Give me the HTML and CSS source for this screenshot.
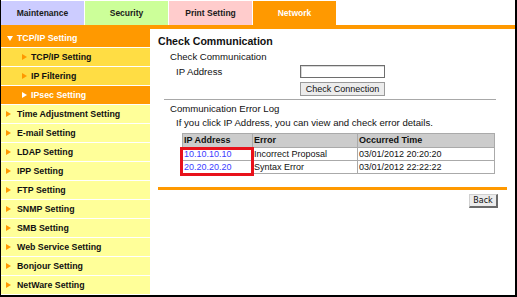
FILE: index.html
```html
<!DOCTYPE html>
<html lang="en">
<head>
    <meta charset="UTF-8">
    <title>Check Communication</title>
    <link rel="stylesheet" href="styles.css">
</head>
<body>
    <div class="frame">
        <div class="tabs">
            <div class="tab tab-maint">Maintenance</div>
            <div class="tab tab-security">Security</div>
            <div class="tab tab-print">Print Setting</div>
            <div class="tab tab-network">Network</div>
        </div>
        <div class="tab-line"></div>

        <div class="body">
            <ul class="menu">
                <li class="menu-head">TCP/IP Setting</li>
                <li class="menu-sub">TCP/IP Setting</li>
                <li class="menu-sub">IP Filtering</li>
                <li class="menu-sub active">IPsec Setting</li>
                <li class="menu-item">Time Adjustment Setting</li>
                <li class="menu-item">E-mail Setting</li>
                <li class="menu-item">LDAP Setting</li>
                <li class="menu-item">IPP Setting</li>
                <li class="menu-item">FTP Setting</li>
                <li class="menu-item">SNMP Setting</li>
                <li class="menu-item">SMB Setting</li>
                <li class="menu-item">Web Service Setting</li>
                <li class="menu-item">Bonjour Setting</li>
                <li class="menu-item">NetWare Setting</li>
            </ul>

            <div class="content">
                <h2>Check Communication</h2>
                <div class="section">
                    <p class="sub-title">Check Communication</p>
                    <div class="field">
                        <label>IP Address</label>
                        <input type="text" class="text-input">
                    </div>
                    <div class="actions">
                        <button class="btn btn-wide">Check Connection</button>
                    </div>
                    <div class="rule"></div>

                    <p class="sub-title log-title">Communication Error Log</p>
                    <p class="hint">If you click IP Address, you can view and check error details.</p>

                    <div class="log-wrap">
                        <table class="log">
                            <tr>
                                <th class="col-ip">IP Address</th>
                                <th class="col-err">Error</th>
                                <th>Occurred Time</th>
                            </tr>
                            <tr>
                                <td><a href="#">10.10.10.10</a></td>
                                <td>Incorrect Proposal</td>
                                <td>03/01/2012 20:20:20</td>
                            </tr>
                            <tr>
                                <td><a href="#">20.20.20.20</a></td>
                                <td>Syntax Error</td>
                                <td>03/01/2012 22:22:22</td>
                            </tr>
                        </table>
                        <div class="highlight"></div>
                    </div>
                </div>

                <div class="orange-rule"></div>
                <div class="footer">
                    <button class="btn btn-back">Back</button>
                </div>
            </div>
        </div>
    </div>
</body>
</html>
```

FILE: styles.css
```css
* {
    margin: 0;
    padding: 0;
    box-sizing: border-box;
}

body {
    font-family: "Liberation Sans", Arial, sans-serif;
    background: white;
    color: #111;
}

.frame {
    width: 517px;
    height: 297px;
    border-left: 1px solid #000;
    border-right: 2px solid #000;
    border-bottom: 2px solid #000;
    display: flex;
    flex-direction: column;
    overflow: hidden;
}

/* top tabs */
.tabs {
    display: flex;
    gap: 1px;
    padding-top: 1px;
}

.tab {
    width: 83px;
    height: 24px;
    display: flex;
    align-items: center;
    justify-content: center;
    font-size: 8.5px;
    font-weight: bold;
    color: #1a1a1a;
}

.tab-maint { background: #ccccff; }
.tab-security { background: #ccff99; }
.tab-print { background: #ffcccc; }
.tab-network { background: #ff9900; color: white; }

.tab-line {
    height: 4px;
    background: #ff9900;
}

.body {
    display: flex;
    flex: 1;
}

/* left menu */
.menu {
    list-style: none;
    width: 149px;
}

.menu li {
    height: 19px;
    border-bottom: 1px solid #fff;
    display: flex;
    align-items: center;
    font-size: 8.8px;
    font-weight: bold;
    color: #111;
    position: relative;
}

.menu li::before {
    content: "";
    position: absolute;
    top: 6px;
    border-left: 5px solid #ff9900;
    border-top: 3px solid transparent;
    border-bottom: 3px solid transparent;
}

.menu-head {
    background: #ff9900;
    color: white !important;
    padding-left: 16px;
}

.menu-head::before {
    left: 6px;
    top: 7px !important;
    border-left: 3px solid transparent !important;
    border-right: 3px solid transparent;
    border-top: 5px solid white !important;
    border-bottom: 0 !important;
}

.menu-sub {
    background: #ffdd44;
    padding-left: 30px;
}

.menu-sub::before {
    left: 21px;
}

.menu-sub.active {
    background: #ff9900;
    color: white !important;
}

.menu-sub.active::before {
    border-left-color: white !important;
}

.menu-item {
    background: #ffff99;
    padding-left: 16px;
}

.menu-item::before {
    left: 5px;
}

/* main content */
.content {
    flex: 1;
    padding: 5px 8px 0 8px;
}

.content h2 {
    font-size: 10.6px;
    line-height: 14px;
    font-weight: bold;
    color: #111;
    margin-bottom: 2px;
}

.section {
    margin: 0 11px 0 6px;
    font-size: 9.6px;
}

.sub-title {
    padding-left: 6px;
    line-height: 14px;
}

.field {
    display: flex;
    align-items: center;
    padding-left: 12px;
    margin-top: 1px;
}

.field label {
    width: 124px;
}

.text-input {
    width: 85px;
    height: 13px;
    border: 1px solid #6e6e6e;
    box-shadow: inset 1px 1px 0 #d8d8d8;
    background: white;
}

.actions {
    padding-left: 136px;
    margin-top: 4px;
}

.btn {
    font-family: "Liberation Sans", Arial, sans-serif;
    background: #ececec;
    color: #111;
    border-style: solid;
    border-color: #d0d0d0 #6a6a6a #6a6a6a #d0d0d0;
    border-width: 1px;
    outline: 1px solid #9a9a9a;
    outline-offset: -1px;
    cursor: pointer;
}

.btn-wide {
    width: 85px;
    height: 14px;
    font-size: 9px;
    line-height: 12px;
}

.rule {
    height: 1px;
    background: #a8a8a8;
    margin-top: 3px;
}

.log-title {
    margin-top: 2px;
}

.hint {
    padding-left: 12px;
    line-height: 13px;
}

.log-wrap {
    position: relative;
    margin: 4px 0 0 18px;
}

.log {
    width: 313px;
    border-collapse: collapse;
    font-size: 9px;
    border: 1px solid #999;
}

.log th,
.log td {
    border: 1px solid #aaa;
    text-align: left;
    padding: 0 2px 0 1px;
    height: 13px;
    line-height: 11px;
    white-space: nowrap;
}

.log th {
    background: #cccccc;
    font-weight: bold;
    height: 14px;
}

.col-ip { width: 70px; }
.col-err { width: 105px; }

.log a {
    color: #3c3cff;
    text-decoration: none;
}

.highlight {
    position: absolute;
    left: -2px;
    top: 14px;
    width: 74px;
    height: 29px;
    border: 3px solid #e8121b;
}

.orange-rule {
    height: 3px;
    background: #ff9900;
    margin-top: 13px;
}

.footer {
    display: flex;
    justify-content: flex-end;
    padding-right: 9px;
    margin-top: 4px;
}

.btn-back {
    width: 29px;
    height: 14px;
    font-family: "DejaVu Sans", Tahoma, sans-serif;
    font-size: 8px;
    line-height: 11px;
    border-width: 1px 2px 2px 1px;
    outline: none;
}
```
